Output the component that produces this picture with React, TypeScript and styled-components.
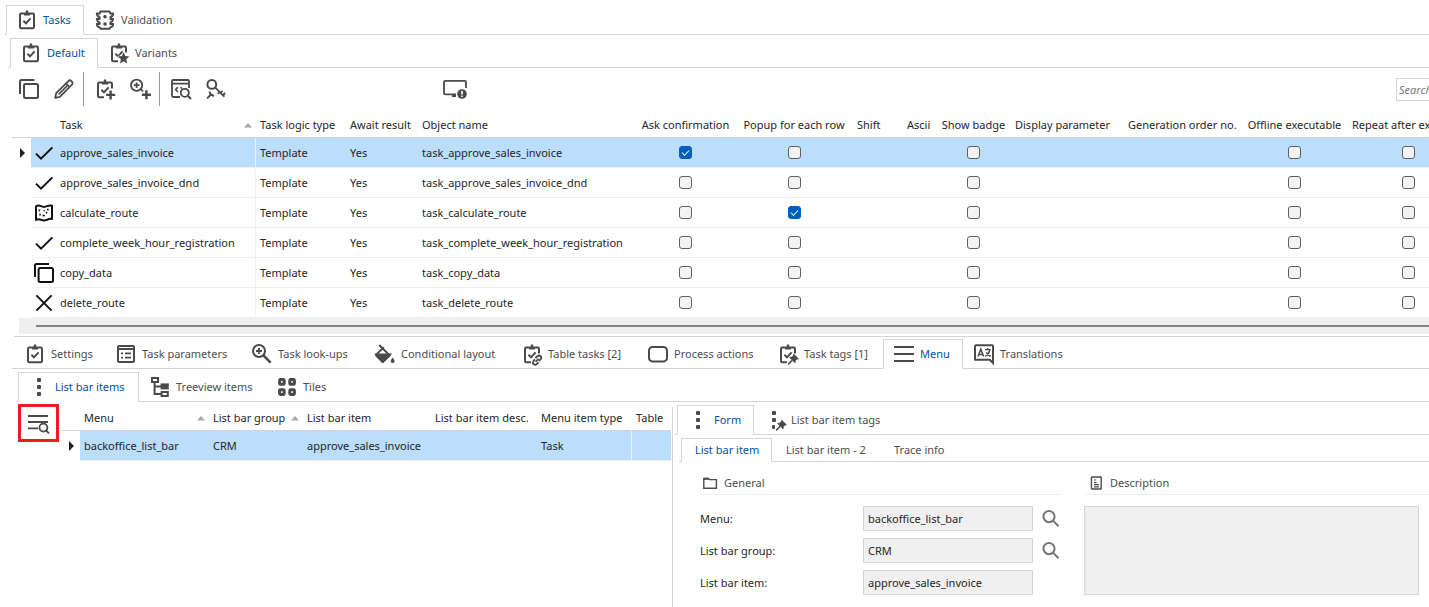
import React, { useState } from "react";
import styled, { createGlobalStyle, css } from "styled-components";

const color = {
  text: "#262626",
  muted: "#4d4d4d",
  accent: "#00539c",
  line: "#d4d4d4",
  hairline: "#f0f0f0",
  selected: "#badefb",
  field: "#f0f0f0",
  icon: "#4a4a4a",
};

const GlobalStyle = createGlobalStyle`
  *, *::before, *::after { box-sizing: border-box; }
  body {
    margin: 0;
    background: #fff;
    color: ${color.text};
    font: 11px/16px "Noto Sans", "Open Sans", sans-serif;
  }
  button, input, textarea { font: inherit; color: inherit; }
`;

/* ---------- icons ---------- */

const Glyph = styled.svg<{ $size?: number }>`
  display: block;
  flex: none;
  width: ${(p) => p.$size ?? 20}px;
  height: ${(p) => p.$size ?? 20}px;
  overflow: visible;
  fill: none;
  stroke: ${color.icon};
  stroke-width: 2;
`;

const Board = ({ cut }: { cut?: boolean }) => (
  <>
    <path
      d={
        cut
          ? "M9 18.2H4.2Q3 18.2 3 17V4.8Q3 3.6 4.2 3.6H15.8Q17 3.6 17 4.8V9.5"
          : "M4.2 3.6H15.8Q17 3.6 17 4.8V17Q17 18.2 15.8 18.2H4.2Q3 18.2 3 17V4.8Q3 3.6 4.2 3.6Z"
      }
    />
    <path d="M10 .6V3M7 4.2H13" strokeWidth="2.4" />
    <path d="M6.4 10.8L9 13.4L13.6 8.4" />
  </>
);

const Pin = () => (
  <g transform="translate(9.5 10)">
    <path d="M6.2 0L11 4.8L9.4 5.2L8 6.6L7.6 9L2 3.4L4.4 3L5.8 1.6Z" fill={color.icon} strokeWidth=".6" />
    <path d="M4.8 6.2L.6 10.4" strokeWidth="1.5" />
  </g>
);

const icons = {
  board: <Board />,
  boardStar: (
    <>
      <Board cut />
      <path
        d="M14.6 9.2L16.3 13L20.4 13.4L17.3 16.2L18.2 20.4L14.6 18.2L11 20.4L11.9 16.2L8.8 13.4L12.9 13Z"
        fill={color.icon}
        stroke="#fff"
        strokeWidth="1"
        paintOrder="stroke"
      />
    </>
  ),
  boardPlus: (
    <>
      <Board cut />
      <path d="M15.6 11.4V20.4M11.2 15.9H20.2" strokeWidth="2.4" />
    </>
  ),
  boardLink: (
    <>
      <Board cut />
      <g strokeWidth="1.8">
        <path d="M13.4 14.2L15.4 12.2Q17 10.8 18.6 12.2Q20 13.8 18.6 15.4L16.8 17" />
        <path d="M16.6 18.4L14.6 20.2Q13 21.4 11.4 20Q10.2 18.4 11.4 17L13 15.4" />
        <path d="M13.6 17.8L16.6 14.6" />
      </g>
    </>
  ),
  boardPin: (
    <>
      <Board cut />
      <Pin />
    </>
  ),
  signal: (
    <>
      <path d="M5.4 1.6H14.6Q15 1.6 15.2 3.4H18.2Q18 6.2 15.4 7.2V9H18.2Q18 11.4 15.4 12.6V14H18.2Q18 17 15.2 17.4Q15 18.8 14.2 18.8H5.8Q5 18.8 4.8 17.4Q2 17 1.8 14H4.6V12.6Q2 11.4 1.8 9H4.6V7.2Q2 6.2 1.8 3.4H4.8Q5 1.6 5.4 1.6Z" strokeLinejoin="round" />
      <circle cx="10" cy="6.8" r="1.8" fill={color.icon} stroke="none" />
      <circle cx="10" cy="14" r="1.8" fill={color.icon} stroke="none" />
    </>
  ),
  copy: (
    <>
      <rect x="5" y="5" width="14" height="14" rx="1.5" />
      <path d="M1 15V2.5Q1 1 2.5 1H15.5" />
    </>
  ),
  pencil: (
    <>
      <path d="M1.2 18.8L2.2 14.2L14.6 1.8Q15.8 .8 17 1.8L18.2 3Q19.2 4.2 18.2 5.4L5.8 17.8Z" strokeWidth="1.8" strokeLinejoin="round" />
      <path d="M12 4.4L15.6 8M4.6 15.4L13.6 6.4" strokeWidth="1.5" />
    </>
  ),
  zoomPlus: (
    <>
      <circle cx="6.6" cy="6.2" r="5.6" strokeWidth="1.8" />
      <path d="M6.6 3.4V9M3.8 6.2H9.4M10.8 10.2L13 12.4" strokeWidth="1.8" />
      <path d="M16.4 11.2V20.2M11.9 15.7H20.9" strokeWidth="2.4" />
    </>
  ),
  codeSearch: (
    <>
      <path d="M9 18H2.2Q1 18 1 16.8V2.2Q1 1 2.2 1H16.8Q18 1 18 2.2V9M1 4.6H18" strokeWidth="1.8" />
      <path d="M6.8 8.2L4.6 10.6L6.8 13M9.6 8.2L11 9.6" strokeWidth="1.6" />
      <circle cx="13.8" cy="13.8" r="4" strokeWidth="1.8" />
      <path d="M16.8 16.8L20 20" />
    </>
  ),
  keyWrench: (
    <>
      <circle cx="5.8" cy="5.4" r="4.4" />
      <path d="M9 8.4L18.4 17.6M13.6 13L11.8 14.8M17 16.2L19.2 14M14.4 13.8L16.6 11.8" strokeWidth="1.8" />
      <path d="M1 19.4L5.6 15M3.6 12.6Q3.6 15.8 8 17" strokeWidth="2" />
    </>
  ),
  monitor: (
    <>
      <path d="M11 15.4H.2Q-1 15.4 -1 14.2V3Q-1 1.8 .2 1.8H19.8Q21 1.8 21 3V9" strokeWidth="1.8" />
      <path d="M7 16.8H11" strokeWidth="2.4" />
      <circle cx="17" cy="15" r="4.8" fill={color.icon} stroke="none" />
      <path d="M17 12V15.6M17 16.6V18" stroke="#fff" strokeWidth="1.6" />
    </>
  ),
  params: (
    <>
      <rect x="2" y="2" width="16" height="16" rx="1" />
      <path d="M2 5H18" strokeWidth="2" />
      <path d="M5 9.4H7M9 9.4H15M5 13.6H7M9 13.6H15" strokeWidth="1.8" />
    </>
  ),
  lookup: (
    <>
      <circle cx="7" cy="7" r="6" />
      <path d="M7 4V10M4 7H10" strokeWidth="1.8" />
      <path d="M11.4 11.4L18.6 18.6" strokeWidth="2.6" />
    </>
  ),
  bucket: (
    <>
      <path d="M4.2 1L14.6 11.4L8.2 17.6Q7.8 18 7.2 17.6L1.4 11.8Q.8 11 1.4 10.4L8.8 3.2" />
      <path d="M1.4 10.4H15L8 17.8Z" fill={color.icon} />
      <path d="M17.6 13.4Q20.2 16.4 19.4 18Q17.6 19.8 15.9 18Q15.2 16.4 17.6 13.4Z" fill={color.icon} stroke="none" />
    </>
  ),
  rounded: <rect x="1" y="3" width="18" height="14.4" rx="3.4" />,
  menu: <path d="M0 3H20M0 10H20M0 17H20" />,
  translate: (
    <>
      <path d="M1 16.6V2.2Q1 1.2 2 1.2H18Q19 1.2 19 2.2V19L15.8 15.8H1" />
      <path d="M4 12.6L6.8 5.2L9.6 12.6M5 10.4H8.6" strokeWidth="1.5" />
      <path d="M11 5.6H16.6M13.6 4V5.6M16 5.6Q15 10 11.2 12.4M12.4 8.4Q14 11.6 16.8 12.4" strokeWidth="1.4" />
    </>
  ),
  dots: (
    <g fill={color.icon} stroke="none">
      <rect x="8" y="1" width="4" height="4" rx="1" />
      <rect x="8" y="8" width="4" height="4" rx="1" />
      <rect x="8" y="15" width="4" height="4" rx="1" />
    </g>
  ),
  dotsPin: (
    <>
      <g fill={color.icon} stroke="none">
        <rect x="7" y="1" width="4" height="4" rx="1" />
        <rect x="7" y="8" width="4" height="4" rx="1" />
        <rect x="7" y="15" width="3" height="4" rx="1" />
      </g>
      <g transform="translate(1 0)">
        <Pin />
      </g>
    </>
  ),
  tree: (
    <>
      <rect x="2" y="1" width="6" height="4" />
      <path d="M4.6 5V17H11M4.6 9.6H11" />
      <rect x="11.6" y="7.4" width="6.2" height="4" fill={color.icon} />
      <rect x="11.6" y="15" width="6.2" height="4" />
    </>
  ),
  tiles: (
    <g strokeWidth="3">
      <rect x="2.6" y="2.6" width="4.6" height="4.6" rx=".8" />
      <rect x="12.8" y="2.6" width="4.6" height="4.6" rx=".8" />
      <rect x="2.6" y="12.8" width="4.6" height="4.6" rx=".8" />
      <rect x="12.8" y="12.8" width="4.6" height="4.6" rx=".8" />
    </g>
  ),
  listSearch: (
    <>
      <path d="M-1 3H19M-1 9H19M-1 15.4H9" strokeWidth="1.8" />
      <circle cx="14.4" cy="14.6" r="4" strokeWidth="1.8" />
      <path d="M17 17.4L20 20.4" />
    </>
  ),
  check: <path d="M2 10.6L7 15.6L18.4 4.4" stroke="#111" />,
  cross: <path d="M2.4 2.4L17.6 17.6M17.6 2.4L2.4 17.6" stroke="#111" />,
  copyRow: (
    <g stroke="#111">
      <rect x="4.6" y="5" width="14.4" height="14" rx="1.5" />
      <path d="M1 14V2.5Q1 1 2.5 1H15" />
    </g>
  ),
  map: (
    <g stroke="#111">
      <path d="M2 3.4Q4.4 1.8 7 3.2Q10 4.6 13 3.2Q15.6 2 18 2.6V16Q15.6 15.4 13 16.8Q10 18 7 16.8Q4.4 15.4 2 17Z" strokeLinejoin="round" />
      <path d="M5.4 6.4V8.2M6 10.8V12.6M8.6 12.4L10.8 12.8M12 10.2L13 9M13.8 5.8V7.4M9.6 7.4L10.6 8" strokeWidth="1.6" />
    </g>
  ),
};

type IconName = keyof typeof icons;

const Icon = ({ name }: { name: IconName }) => (
  <Glyph viewBox="0 0 20 20" aria-hidden="true">
    {icons[name]}
  </Glyph>
);

const Magnifier = () => (
  <Glyph viewBox="0 0 18 18" $size={18} aria-hidden="true">
    <circle cx="7" cy="6.6" r="5.6" stroke="#757575" />
    <path d="M11 10.6L16.6 16.2" stroke="#757575" />
  </Glyph>
);

const Folder = () => (
  <Glyph viewBox="0 0 16 16" $size={16} aria-hidden="true">
    <path d="M1.8 13.2V3.4H6.4L7.4 4.6H14.4V13.2Z" strokeWidth="1.4" />
    <path d="M1.8 3.8H6.8" strokeWidth="2" />
  </Glyph>
);

const Note = () => (
  <Glyph viewBox="0 0 16 16" $size={16} aria-hidden="true">
    <rect x="3.4" y="2" width="9.8" height="12" rx=".6" strokeWidth="1.4" />
    <path d="M6 5H8M6 7.6H8.6M6 9.6H11M6 11.8H11" strokeWidth="1.2" />
  </Glyph>
);

const Pointer = () => (
  <Glyph viewBox="0 0 10 10" $size={10} aria-hidden="true">
    <path d="M3 0L8 5L3 10Z" fill="#222" stroke="none" />
  </Glyph>
);

const SortArrow = () => (
  <Glyph viewBox="0 0 8 8" $size={8} aria-hidden="true">
    <path d="M0 6.5L4 2L8 6.5Z" fill="#a8a8a8" stroke="none" />
  </Glyph>
);

/* ---------- tabs ---------- */

const Strip = styled.div<{ $indent: number; $pad?: number; $top?: number; $compact?: boolean }>`
  display: flex;
  height: ${(p) => (p.$compact ? 24 : 30)}px;
  margin: ${(p) => p.$top ?? 3}px 0 0 ${(p) => p.$indent}px;
  padding-left: ${(p) => p.$pad ?? 2}px;
  border-bottom: 1px solid ${color.line};
`;

const TabButton = styled.button<{ $active?: boolean; $width: number; $bare?: boolean }>`
  display: flex;
  flex: none;
  align-items: center;
  gap: 6px;
  width: ${(p) => p.$width}px;
  height: ${(p) => (p.$bare ? 24 : 30)}px;
  padding: 0 0 0 ${(p) => (p.$bare ? 13 : 10)}px;
  border: 1px solid transparent;
  background: none;
  color: ${color.muted};
  white-space: nowrap;
  ${(p) =>
    p.$active &&
    css`
      border-color: ${color.line};
      border-bottom-color: #fff;
      background: #fff;
      color: ${color.accent};
    `}
`;

type TabSpec = { label: string; width: number; icon?: IconName };

const Tabs = ({
  tabs,
  initial = 0,
  name,
  ...strip
}: {
  tabs: TabSpec[];
  initial?: number;
  name: string;
  indent: number;
  pad?: number;
  top?: number;
  compact?: boolean;
}) => {
  const [active, setActive] = useState(initial);
  return (
    <Strip
      role="tablist"
      aria-label={name}
      $indent={strip.indent}
      $pad={strip.pad}
      $top={strip.top}
      $compact={strip.compact}
    >
      {tabs.map((t, i) => (
        <TabButton
          key={t.label}
          type="button"
          role="tab"
          aria-selected={i === active}
          $active={i === active}
          $width={t.width}
          $bare={!t.icon}
          onClick={() => setActive(i)}
        >
          {t.icon && <Icon name={t.icon} />}
          {t.label}
        </TabButton>
      ))}
    </Strip>
  );
};

/* ---------- toolbar ---------- */

const Toolbar = styled.div`
  display: flex;
  align-items: center;
  min-width: 1516px;
  height: 42px;
  margin-bottom: 2px;
  padding-left: 11px;
`;

const ToolButton = styled.button`
  display: flex;
  align-items: center;
  justify-content: center;
  width: 35px;
  height: 34px;
  padding: 0;
  border: 0;
  background: none;
`;

const ToolDivider = styled.span`
  width: 1px;
  height: 34px;
  margin: 0 3px 0 2px;
  background: #9a9a9a;
`;

const ToolGap = styled.span`
  width: 204px;
`;

const SearchBox = styled.input`
  width: 120px;
  height: 23px;
  margin-left: auto;
  padding: 0 2px;
  border: 1px solid ${color.line};
  background: #fff;
  &::placeholder {
    color: #7a7a7a;
    font-style: italic;
    opacity: 1;
  }
`;

/* ---------- grids ---------- */

const TaskScroller = styled.div`
  margin-left: 12px;
  overflow: hidden;
`;

const Grid = styled.table<{ $width: number }>`
  width: ${(p) => p.$width}px;
  table-layout: fixed;
  border-collapse: separate;
  border-spacing: 0;
`;

const HeadCell = styled.th<{ $center?: boolean }>`
  height: 26px;
  padding: 0 4px;
  border-bottom: 1px solid ${color.line};
  font-weight: normal;
  text-align: ${(p) => (p.$center ? "center" : "left")};
  white-space: nowrap;
`;

const HeadLabel = styled.span`
  display: flex;
  align-items: center;
  justify-content: space-between;
`;

const Cell = styled.td<{ $rule?: boolean; $gutter?: boolean }>`
  height: 30px;
  padding: 0 4px;
  border-bottom: 1px solid ${(p) => (p.$gutter ? "transparent" : color.hairline)};
  border-right: ${(p) => (p.$rule ? `1px solid ${color.hairline}` : "0")};
  white-space: nowrap;
  & > svg {
    margin: 0 auto;
  }
`;

const Row = styled.tr<{ $selected?: boolean }>`
  & > td + td {
    background: ${(p) => (p.$selected ? color.selected : "transparent")};
  }
`;

const IconCell = styled(Cell)`
  padding: 0 2px;
`;

const Tick = styled.input`
  display: grid;
  place-items: center;
  appearance: none;
  width: 13px;
  height: 13px;
  margin: 0 auto;
  border: 1px solid #5f5f5f;
  border-radius: 3px;
  background: #f3f3f3;
  &:checked {
    border-color: #005fb8;
    background: #005fb8;
  }
  &:checked::after {
    content: "";
    width: 7px;
    height: 4px;
    margin-bottom: 2px;
    border: solid #d9ecff;
    border-width: 0 0 1px 1px;
    transform: rotate(-45deg);
  }
`;

const ScrollTrack = styled.div`
  display: flex;
  align-items: center;
  height: 16px;
  margin-left: 19px;
  padding-left: 17px;
  background: #efefef;
`;

const ScrollThumb = styled.div`
  flex: 1;
  height: 2px;
  background: #828282;
`;

const PaneEdge = styled.div`
  height: 1px;
  margin: 2px 0 0 14px;
  background: ${color.line};
`;

/* ---------- detail ---------- */

const Page = styled.main`
  display: flex;
  flex-direction: column;
  min-height: 100vh;
  overflow: hidden;
`;

const Split = styled.div`
  display: flex;
  flex: 1;
`;

const ListPane = styled.section`
  display: flex;
  flex: 0 0 672px;
  align-items: flex-start;
  gap: 2px;
  padding-left: 18px;
`;

const FlaggedButton = styled.button`
  display: flex;
  flex: none;
  align-items: center;
  justify-content: center;
  width: 41px;
  height: 38px;
  margin-top: 2px;
  padding: 0;
  border: 3px solid #ed1c24;
  background: #fff;
`;

const ListGrid = styled.div`
  padding-top: 3px;
`;

const Splitter = styled.div`
  flex: none;
  width: 1px;
  margin-top: 5px;
  background: ${color.line};
`;

const FormPane = styled.section`
  flex: 1;
  min-width: 0;
`;

const FormBody = styled.div`
  display: flex;
  align-items: flex-start;
  gap: 22px;
  padding: 10px 0 12px 27px;
`;

const GroupTitle = styled.div`
  display: flex;
  align-items: center;
  gap: 6px;
  height: 23px;
  margin-bottom: 11px;
  padding-left: 2px;
  border-bottom: 1px solid ${color.hairline};
  color: ${color.muted};
`;

const Group = styled.fieldset<{ $grow?: boolean }>`
  flex: ${(p) => (p.$grow ? "1" : "0 0 362px")};
  min-width: 0;
  margin: 0;
  padding: 0;
  border: 0;
  & > ${GroupTitle} {
    margin-left: ${(p) => (p.$grow ? 2 : 0)}px;
  }
`;

const Field = styled.div`
  display: grid;
  grid-template-columns: 163px 170px 34px;
  align-items: center;
  height: 25px;
  margin-bottom: 7px;
`;

const TextField = styled.input`
  width: 100%;
  height: 25px;
  padding: 0 4px;
  border: 1px solid ${color.line};
  background: ${color.field};
`;

const LookupButton = styled.button`
  display: flex;
  padding: 0 0 0 9px;
  border: 0;
  background: none;
`;

const Description = styled.textarea`
  display: block;
  width: calc(100% - 10px);
  height: 89px;
  padding: 4px;
  border: 1px solid ${color.line};
  background: ${color.field};
  resize: none;
`;

/* ---------- data ---------- */

type Task = { icon: IconName; name: string; popup?: boolean; confirm?: boolean };

const tasks: Task[] = [
  { icon: "check", name: "approve_sales_invoice", confirm: true },
  { icon: "check", name: "approve_sales_invoice_dnd" },
  { icon: "map", name: "calculate_route", popup: true },
  { icon: "check", name: "complete_week_hour_registration" },
  { icon: "copyRow", name: "copy_data" },
  { icon: "cross", name: "delete_route" },
];

const taskColumns: { label: string; width: number; center?: boolean }[] = [
  { label: "Task logic type", width: 90 },
  { label: "Await result", width: 72 },
  { label: "Object name", width: 218 },
  { label: "Ask confirmation", width: 99, center: true },
  { label: "Popup for each row", width: 118, center: true },
  { label: "Shift", width: 50 },
  { label: "Ascii", width: 33 },
  { label: "Show badge", width: 75, center: true },
  { label: "Display parameter", width: 113 },
  { label: "Generation order no.", width: 117 },
  { label: "Offline executable", width: 107, center: true },
  { label: "Repeat after execution", width: 121, center: true },
];

const detailTabs: TabSpec[] = [
  { label: "Settings", icon: "board", width: 91 },
  { label: "Task parameters", icon: "params", width: 136 },
  { label: "Task look-ups", icon: "lookup", width: 123 },
  { label: "Conditional layout", icon: "bucket", width: 147 },
  { label: "Table tasks [2]", icon: "boardLink", width: 126 },
  { label: "Process actions", icon: "rounded", width: 130 },
  { label: "Task tags [1]", icon: "boardPin", width: 116 },
  { label: "Menu", icon: "menu", width: 80 },
  { label: "Translations", icon: "translate", width: 110 },
];

const tools: { label: string; icon: IconName }[][] = [
  [
    { label: "Copy", icon: "copy" },
    { label: "Edit", icon: "pencil" },
  ],
  [
    { label: "Add task", icon: "boardPlus" },
    { label: "Add look-up", icon: "zoomPlus" },
  ],
  [
    { label: "Show code", icon: "codeSearch" },
    { label: "Access rights", icon: "keyWrench" },
  ],
];

const TaskGrid = () => (
  <TaskScroller>
    <Grid $width={1457}>
      <colgroup>
        <col width={19} />
        <col width={25} />
        <col width={200} />
        {taskColumns.map((c) => (
          <col key={c.label} width={c.width} />
        ))}
      </colgroup>
      <thead>
        <tr>
          <HeadCell />
          <HeadCell />
          <HeadCell>
            <HeadLabel>
              Task <SortArrow />
            </HeadLabel>
          </HeadCell>
          {taskColumns.map((c) => (
            <HeadCell key={c.label} $center={c.center}>
              {c.label}
            </HeadCell>
          ))}
        </tr>
      </thead>
      <tbody>
        {tasks.map((t, i) => {
          const tick = (what: string, on?: boolean) => (
            <Cell>
              <Tick type="checkbox" defaultChecked={on} aria-label={`${what}: ${t.name}`} />
            </Cell>
          );
          return (
            <Row key={t.name} $selected={i === 0}>
              <Cell $gutter>{i === 0 && <Pointer />}</Cell>
              <IconCell>
                <Icon name={t.icon} />
              </IconCell>
              <Cell $rule>{t.name}</Cell>
              <Cell>Template</Cell>
              <Cell>Yes</Cell>
              <Cell>task_{t.name}</Cell>
              {tick("Ask confirmation", t.confirm)}
              {tick("Popup for each row", t.popup)}
              <Cell />
              <Cell />
              {tick("Show badge")}
              <Cell />
              <Cell />
              {tick("Offline executable")}
              {tick("Repeat after execution")}
            </Row>
          );
        })}
      </tbody>
    </Grid>
  </TaskScroller>
);

const MenuGrid = () => (
  <Grid $width={610}>
    <colgroup>
      <col width={19} />
      <col width={129} />
      <col width={94} />
      <col width={128} />
      <col width={106} />
      <col width={95} />
      <col width={39} />
    </colgroup>
    <thead>
      <tr>
        <HeadCell />
        <HeadCell>
          <HeadLabel>
            Menu <SortArrow />
          </HeadLabel>
        </HeadCell>
        <HeadCell>
          <HeadLabel>
            List bar group <SortArrow />
          </HeadLabel>
        </HeadCell>
        <HeadCell>List bar item</HeadCell>
        <HeadCell>List bar item desc.</HeadCell>
        <HeadCell>Menu item type</HeadCell>
        <HeadCell>Table</HeadCell>
      </tr>
    </thead>
    <tbody>
      <Row $selected>
        <Cell $gutter>
          <Pointer />
        </Cell>
        <Cell>backoffice_list_bar</Cell>
        <Cell>CRM</Cell>
        <Cell>approve_sales_invoice</Cell>
        <Cell />
        <Cell $rule>Task</Cell>
        <Cell />
      </Row>
    </tbody>
  </Grid>
);

export default function App() {
  return (
    <>
      <GlobalStyle />
      <Page>
        <Tabs
          name="Model"
          indent={4}
          top={5}
          tabs={[
            { label: "Tasks", icon: "board", width: 78 },
            { label: "Validation", icon: "signal", width: 100 },
          ]}
        />
        <Tabs
          name="Tasks"
          indent={8}
          tabs={[
            { label: "Default", icon: "board", width: 88 },
            { label: "Variants", icon: "boardStar", width: 90 },
          ]}
        />
        <Toolbar role="toolbar" aria-label="Task actions">
          {tools.map((group, i) => (
            <React.Fragment key={group[0].label}>
              {i > 0 && <ToolDivider />}
              {group.map((t) => (
                <ToolButton key={t.label} type="button" aria-label={t.label}>
                  <Icon name={t.icon} />
                </ToolButton>
              ))}
            </React.Fragment>
          ))}
          <ToolGap />
          <ToolButton type="button" aria-label="Screen information">
            <Icon name="monitor" />
          </ToolButton>
          <SearchBox type="search" placeholder="Search..." aria-label="Search" />
        </Toolbar>
        <TaskGrid />
        <ScrollTrack>
          <ScrollThumb />
        </ScrollTrack>
        <PaneEdge />
        <Tabs name="Task details" indent={12} top={2} initial={7} tabs={detailTabs} />
        <Tabs
          name="Menu"
          indent={16}
          tabs={[
            { label: "List bar items", icon: "dots", width: 121 },
            { label: "Treeview items", icon: "tree", width: 127 },
            { label: "Tiles", icon: "tiles", width: 70 },
          ]}
        />
        <Split>
          <ListPane>
            <FlaggedButton type="button" aria-label="Find in list">
              <Icon name="listSearch" />
            </FlaggedButton>
            <ListGrid>
              <MenuGrid />
            </ListGrid>
          </ListPane>
          <Splitter />
          <FormPane>
            <Tabs
              name="View"
              indent={2}
              tabs={[
                { label: "Form", icon: "dots", width: 77 },
                { label: "List bar item tags", icon: "dotsPin", width: 140 },
              ]}
            />
            <Tabs
              name="Form pages"
              indent={6}
              compact
              tabs={[
                { label: "List bar item", width: 91 },
                { label: "List bar item - 2", width: 108 },
                { label: "Trace info", width: 90 },
              ]}
            />
            <FormBody>
              <Group aria-label="General">
                <GroupTitle>
                  <Folder /> General
                </GroupTitle>
                <Field>
                  <label htmlFor="menu">Menu:</label>
                  <TextField id="menu" readOnly defaultValue="backoffice_list_bar" />
                  <LookupButton type="button" aria-label="Look up menu">
                    <Magnifier />
                  </LookupButton>
                </Field>
                <Field>
                  <label htmlFor="group">List bar group:</label>
                  <TextField id="group" readOnly defaultValue="CRM" />
                  <LookupButton type="button" aria-label="Look up list bar group">
                    <Magnifier />
                  </LookupButton>
                </Field>
                <Field>
                  <label htmlFor="item">List bar item:</label>
                  <TextField id="item" readOnly defaultValue="approve_sales_invoice" />
                </Field>
              </Group>
              <Group $grow aria-label="Description">
                <GroupTitle>
                  <Note /> <label htmlFor="description">Description</label>
                </GroupTitle>
                <Description id="description" readOnly />
              </Group>
            </FormBody>
          </FormPane>
        </Split>
      </Page>
    </>
  );
}
